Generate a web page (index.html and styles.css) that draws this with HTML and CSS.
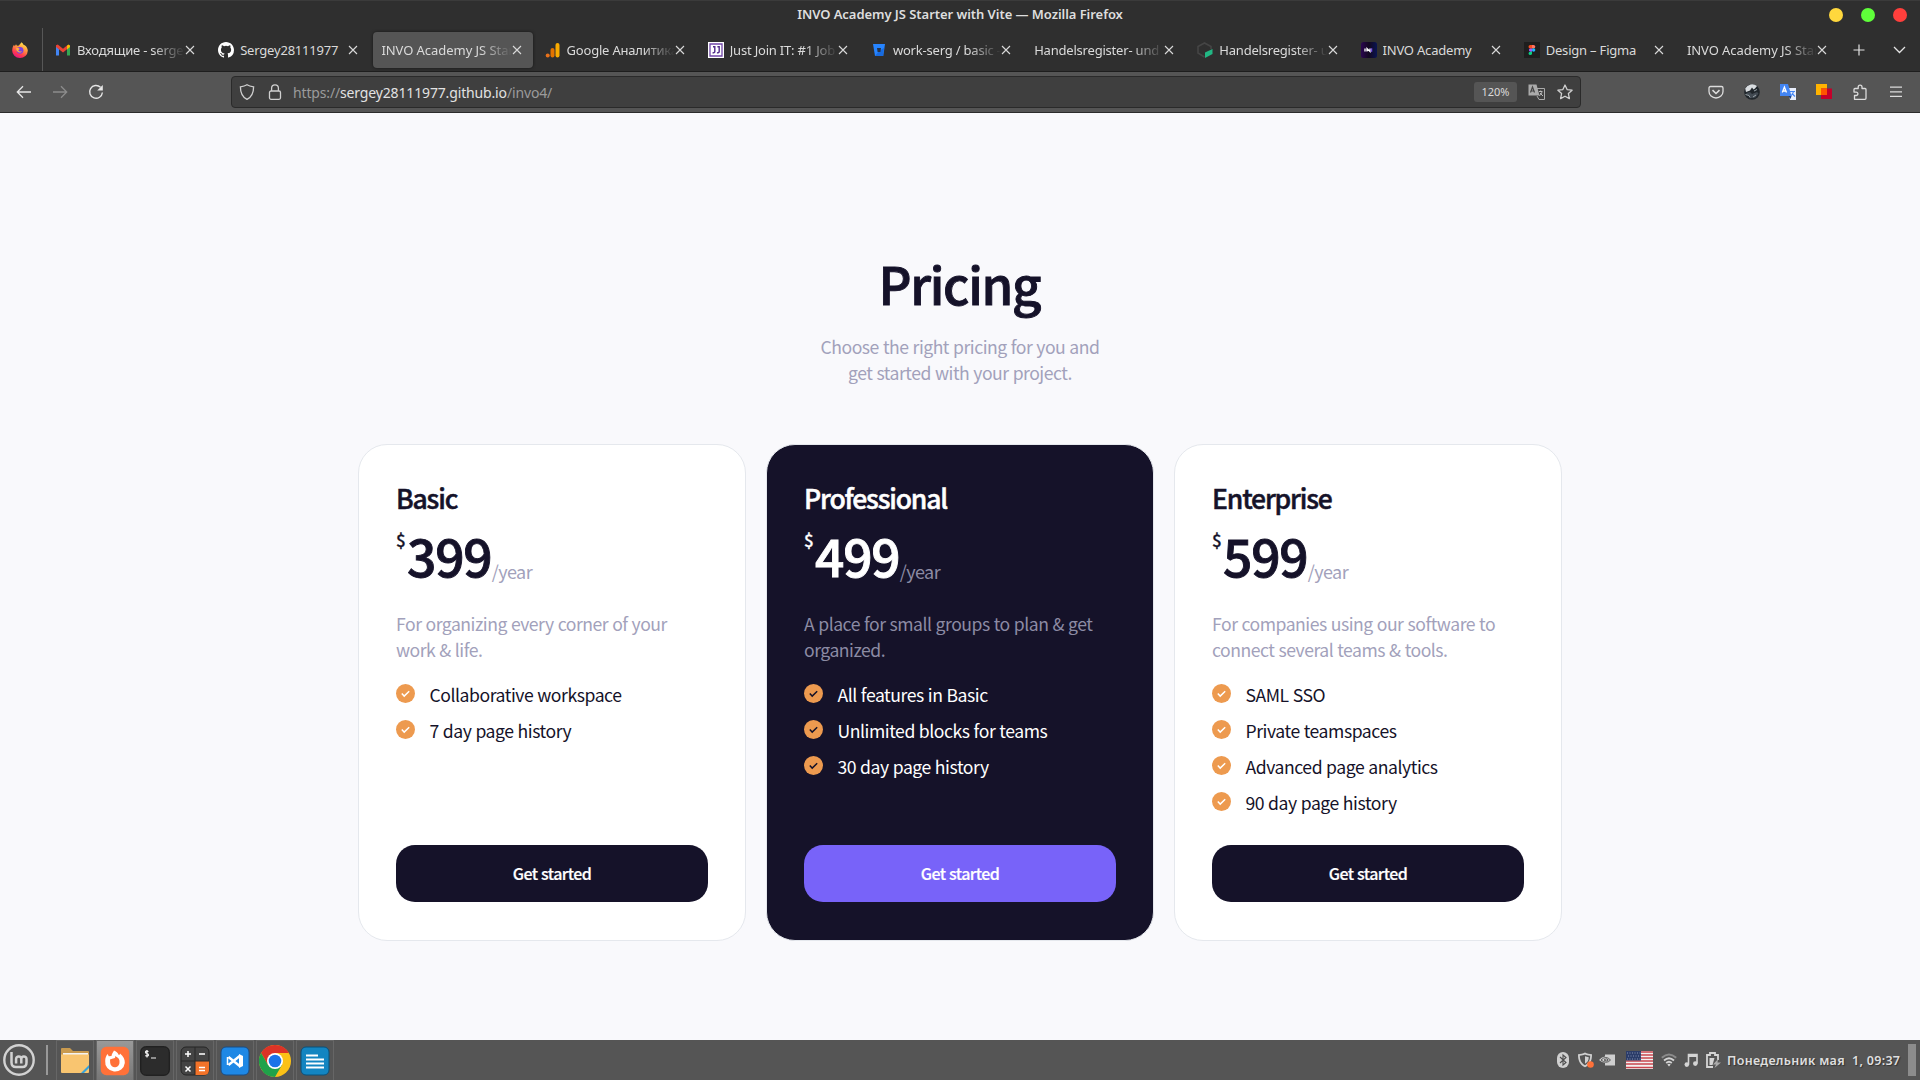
FILE: index.html
```html
<!DOCTYPE html>
<html lang="en">
<head>
<meta charset="utf-8">
<title>INVO Academy JS Starter with Vite</title>
<link rel="stylesheet" href="styles.css">
</head>
<body>
<svg class="defs" width="0" height="0">
  <symbol id="x" viewBox="0 0 10 10"><path d="M1 1l8 8M9 1L1 9" stroke="#dadada" stroke-width="1.1" fill="none"/></symbol>
  <symbol id="check" viewBox="0 0 19 19"><circle cx="9.5" cy="9.5" r="9.5" fill="#ed9a4f"/><path d="M5.8 9.6l2.4 2.5 5-4.8" fill="none" stroke="currentColor" stroke-width="1.5"/></symbol>
</svg>

<header class="titlebar">
  <span class="title">INVO Academy JS Starter with Vite — Mozilla Firefox</span>
  <div class="win"><i class="min"></i><i class="max"></i><i class="cls"></i></div>
</header>

<nav class="tabs">
  <div class="home">
    <svg width="16" height="16" viewBox="0 0 16 16"><defs><linearGradient id="ff" x1=".8" y1="0" x2=".3" y2="1"><stop offset="0" stop-color="#fff44f"/><stop offset=".4" stop-color="#ff9640"/><stop offset=".75" stop-color="#ff3750"/><stop offset="1" stop-color="#e31587"/></linearGradient></defs><path d="M9.5.2c1.200.9 1.700 1.800 2 2.600 2 .6 4.300 3 4.300 6A7.800 7.300 0 0 1 .2 8.500C.2 6 1.200 4 2 2.800l.8 1.500L4 2.200l1 1.600 2-.2C7.500 2.200 8.500 1.500 9.500.2z" fill="url(#ff)"/><circle cx="8" cy="8.300" r="3.400" fill="#7a3fe0"/><path d="M4 6.500c2-1 3 0 4 .6-1 .3-1.700.8-1.500 1.700.5 1 2.200.8 3.300.1-.3 2-4.800 3-5.800-2.400z" fill="#ffb13b"/></svg>
  </div>
  <div class="tab"><svg width="16" height="16" viewBox="0 0 16 16"><path d="M1 3.500v10h3V7z" fill="#4285f4"/><path d="M15 3.500v10h-3V7z" fill="#34a853"/><path d="M1 3.200L2.800 2.600 8 6.800l4-3.200V7.200l-4 3.200-7-5.300z" fill="#ea4335"/><path d="M12 3.600l1.500-1 1.500.8v1.700l-3 2.300z" fill="#fbbc04"/></svg><span class="t">Входящие - sergey28</span><svg class="c"><use href="#x"/></svg></div>
  <div class="tab"><svg width="16" height="16" viewBox="0 0 16 16"><path fill="#fff" d="M8 0C3.580 0 0 3.580 0 8c0 3.540 2.290 6.530 5.470 7.590.4.070.55-.17.55-.38v-1.490c-2.010.37-2.530-.49-2.690-.94-.09-.23-.48-.94-.82-1.130-.28-.15-.68-.52-.01-.53.63-.01 1.080.58 1.230.82.72 1.210 1.870.87 2.330.66.070-.52.28-.87.51-1.070-1.780-.2-3.640-.89-3.640-3.950 0-.87.31-1.590.82-2.150-.08-.2-.36-1.020.08-2.120 0 0 .67-.21 2.200.82a7.600 7.600 0 0 1 4 0c1.530-1.040 2.200-.82 2.200-.82.44 1.100.16 1.920.08 2.120.51.56.82 1.270.82 2.150 0 3.070-1.870 3.750-3.650 3.950.29.25.54.73.54 1.480v2.200c0 .21.150.46.55.38A8 8 0 0 0 16 8c0-4.420-3.580-8-8-8z"/></svg><span class="t gh">Sergey28111977</span><svg class="c"><use href="#x"/></svg></div>
  <div class="tab active"><span class="t inv">INVO Academy JS Starter</span><svg class="c"><use href="#x"/></svg></div>
  <div class="tab"><svg width="16" height="16" viewBox="0 0 16 16"><rect x="10.500" y="1" width="4" height="14.500" rx="2" fill="#f9ab00"/><rect x="5.500" y="6" width="4" height="9.500" rx="2" fill="#e37400"/><circle cx="2.700" cy="13.500" r="2" fill="#e8711a"/></svg><span class="t">Google Аналитика</span><svg class="c"><use href="#x"/></svg></div>
  <div class="tab"><svg width="16" height="16" viewBox="0 0 16 16"><path fill="#fff" d="M0 0h16v16H0z"/><path fill="none" stroke="#7045a8" stroke-width="1.300" d="M2 2h12v12H2z"/><path fill="none" stroke="#512b8b" stroke-width="1.400" d="M5 4.700h1.800v4.800q0 1.400-2.300 1.400M9.400 4.700h1.800v4.800q0 1.400-2.300 1.400"/></svg><span class="t">Just Join IT: #1 Job Board</span><svg class="c"><use href="#x"/></svg></div>
  <div class="tab"><svg width="16" height="16" viewBox="0 0 16 16"><path fill="#2684ff" d="M2 2h12l-1.700 12H4z"/><path fill="#0c57c8" d="M8 9l5-3-1 8H4z" opacity=".55"/><path fill="#263349" d="M6 6h4l-.6 4H6.600z"/></svg><span class="t">work-serg / basic — Bit</span><svg class="c"><use href="#x"/></svg></div>
  <div class="tab"><span class="t">Handelsregister- und Wirt</span><svg class="c"><use href="#x"/></svg></div>
  <div class="tab"><svg width="16" height="16" viewBox="0 0 16 16"><path d="M7.500 15L1 11V4.500L7.500 1 14 4.500V7" fill="none" stroke="#454545" stroke-width="1.600"/><path d="M8 10.500L15.500 7v5L8 16z" fill="#22b784"/></svg><span class="t">Handelsregister- und</span><svg class="c"><use href="#x"/></svg></div>
  <div class="tab"><svg width="16" height="16" viewBox="0 0 16 16"><defs><linearGradient id="iv"><stop stop-color="#2b0750"/><stop offset=".5" stop-color="#130820"/><stop offset="1" stop-color="#091452"/></linearGradient></defs><rect width="16" height="16" rx="2.500" fill="url(#iv)"/><path d="M4 6.500v3M6 9.500v-3l3 3v-3" stroke="#fff" stroke-width="1.300" fill="none"/><path d="M10.500 6.300v3.500" stroke="#7a52e8" stroke-width="1.500"/></svg><span class="t gh">INVO Academy</span><svg class="c"><use href="#x"/></svg></div>
  <div class="tab"><svg width="16" height="16" viewBox="0 0 16 16"><path fill="#1e1e1e" d="M0 0h16v16H0z"/><path fill="#f24e1e" d="M8 3H6.200a1.700 1.700 0 0 0 0 3.400H8z"/><path fill="#ff7262" d="M8 3h1.600a1.700 1.700 0 0 1 0 3.400H8z"/><path fill="#a259ff" d="M8 6.400H6.200a1.700 1.700 0 0 0 0 3.300H8z"/><circle cx="9.600" cy="8" r="1.700" fill="#1abcfe"/><path fill="#0acf83" d="M8 9.700H6.200A1.700 1.700 0 1 0 8 11.400z"/></svg><span class="t gh">Design – Figma</span><svg class="c"><use href="#x"/></svg></div>
  <div class="tab"><span class="t inv">INVO Academy JS Starter</span><svg class="c"><use href="#x"/></svg></div>
  <div class="tabtools">
    <svg width="12" height="12" viewBox="0 0 12 12"><path d="M6 .5v11M.5 6h11" stroke="#e4e4e4" stroke-width="1.200"/></svg>
    <svg width="13" height="8" viewBox="0 0 13 8"><path d="M1 1l5.500 5.500L12 1" fill="none" stroke="#e4e4e4" stroke-width="1.300"/></svg>
  </div>
</nav>

<div class="toolbar">
  <div class="nav">
    <svg width="16" height="16" viewBox="0 0 16 16" fill="none" stroke="#e6e6e6" stroke-width="1.300"><path d="M15 8H1.500M7 2.300L1.300 8 7 13.700"/></svg>
    <svg width="16" height="16" viewBox="0 0 16 16" fill="none" stroke="#8c8c8c" stroke-width="1.300"><path d="M1 8h13.500M9 2.300L14.700 8 9 13.700"/></svg>
    <svg width="16" height="16" viewBox="0 0 16 16"><path d="M12.500 3.300A6.400 6.400 0 1 0 14.400 8.500" fill="none" stroke="#e6e6e6" stroke-width="1.400"/><path d="M14.800 1v5.600H9.200z" fill="#e6e6e6"/></svg>
  </div>
  <div class="url">
    <svg width="16" height="16" viewBox="0 0 16 16" fill="none" stroke="#d0d0d0" stroke-width="1.300"><path d="M8 .8c2 1.300 4 1.700 6.600 2C14.600 8.500 13 13 8 15.400 3 13 1.400 8.500 1.400 2.800 4 2.500 6 2.100 8 .8z"/></svg>
    <svg width="16" height="16" viewBox="0 0 16 16" fill="none" stroke="#d0d0d0" stroke-width="1.300"><rect x="2.500" y="7" width="11" height="8.300" rx="1.500"/><path d="M4.600 7V4.200a3.400 3.400 0 0 1 6.800 0V7"/></svg>
    <span class="addr">https://<b>sergey28111977.github.io</b>/invo4/</span>
    <span class="zoom">120%</span>
    <svg width="17" height="16" viewBox="0 0 17 16"><path d="M.5.500h8l3 11h-11z" fill="#aaa"/><path d="M8.500 4.500h8v11h-5.500l-2-3.500" fill="none" stroke="#aaa"/><path d="M2.500 8.500L4.500 3l2 5.500M3 7h3" stroke="#444" stroke-width="1.200" fill="none"/><path d="M11 7.500h3.500M12.700 6.500c2 2 1 4-1.500 5M12 9l3 3" stroke="#bbb" fill="none"/></svg>
    <svg width="16" height="16" viewBox="0 0 16 16" fill="none" stroke="#d0d0d0" stroke-width="1.300" stroke-linejoin="round"><path d="M8 1l2.100 4.600 5 .6-3.700 3.400 1 5L8 12.200l-4.400 2.400 1-5L.9 6.200l5-.6z"/></svg>
  </div>
  <div class="ext">
    <svg width="16" height="16" viewBox="0 0 16 16" fill="none" stroke="#dcdcdc" stroke-width="1.300"><path d="M2.500 2.500h11q1.500 0 1.500 1.500v3.500a7 6.500 0 0 1-14 0V4q0-1.500 1.500-1.500z"/><path d="M4.500 6.200L8 9.500l3.500-3.300" stroke-width="1.600"/></svg>
    <svg width="16" height="16" viewBox="0 0 16 16"><circle cx="8" cy="8" r="7.800" fill="#20262b"/><path d="M1.200 4.500A7.800 7.800 0 0 1 13 2l-2 2.500-1.500 1-1.500-2-2 3-4 1.500z" fill="#d9dde0"/><path d="M2 9l4-1 2 2 5-2 1.500 1.500-3 4-5 .8z" fill="#424a52"/><path d="M1.500 10.500l3.500 1 1 2M10 7l3-1.500M9 13l3-2" stroke="#9ba5ab" fill="none"/></svg>
    <svg width="16" height="16" viewBox="0 0 16 16"><path d="M8 4h8v12h-6z" fill="#e8eefb"/><path d="M0 0h8l3.500 12H0z" fill="#4285f4"/><path d="M8.500 12h3l-1 3z" fill="#173a7b"/><path d="M2.300 8.500L4.400 3l2.100 5.500M3 7h3" stroke="#fff" stroke-width="1.300" fill="none"/><path d="M10 7.500h5M13.500 7.500q-.5 3-3 4.500M12 9.500l3 3" stroke="#4285f4" stroke-width="1.200" fill="none"/></svg>
    <svg width="16" height="16" viewBox="0 0 16 16"><path fill="#ffb300" d="M0 0h11v11H0z"/><path fill="#c4002b" d="M5 4.500h11V15H5z"/><path fill="#ff5400" d="M5 4.500h6V11H5z"/></svg>
    <svg width="16" height="16" viewBox="0 0 16 16" fill="none" stroke="#dcdcdc" stroke-width="1.300" stroke-linejoin="round"><path d="M2.500 15.300V11.500h1.700a1.700 1.700 0 0 0 0-3.400H2V5.500q0-1 1-1h3.200V3a1.900 1.900 0 0 1 3.800 0v1.500h3q1 0 1 1v8.800q0 1-1 1z"/></svg>
    <svg width="16" height="16" viewBox="0 0 16 16"><path d="M2 3.200h12M2 7.800h12M2 12.400h12" stroke="#dcdcdc" stroke-width="1.200"/></svg>
  </div>
</div>

<main class="page">
  <h1>Pricing</h1>
  <p class="lead">Choose the right pricing for you and<br>get started with your project.</p>
  <section class="cards">
    <article class="card">
      <h2>Basic</h2>
      <div class="price"><sup>$</sup><strong>399</strong><span>/year</span></div>
      <p class="desc">For organizing every corner of your<br>work &amp; life.</p>
      <ul>
        <li><svg><use href="#check"/></svg>Collaborative workspace</li>
        <li><svg><use href="#check"/></svg>7 day page history</li>
      </ul>
      <button>Get started</button>
    </article>
    <article class="card dark">
      <h2>Professional</h2>
      <div class="price"><sup>$</sup><strong>499</strong><span>/year</span></div>
      <p class="desc">A place for small groups to plan &amp; get<br>organized.</p>
      <ul>
        <li><svg><use href="#check"/></svg>All features in Basic</li>
        <li><svg><use href="#check"/></svg>Unlimited blocks for teams</li>
        <li><svg><use href="#check"/></svg>30 day page history</li>
      </ul>
      <button>Get started</button>
    </article>
    <article class="card">
      <h2>Enterprise</h2>
      <div class="price"><sup>$</sup><strong>599</strong><span>/year</span></div>
      <p class="desc">For companies using our software to<br>connect several teams &amp; tools.</p>
      <ul>
        <li><svg><use href="#check"/></svg>SAML SSO</li>
        <li><svg><use href="#check"/></svg>Private teamspaces</li>
        <li><svg><use href="#check"/></svg>Advanced page analytics</li>
        <li><svg><use href="#check"/></svg>90 day page history</li>
      </ul>
      <button>Get started</button>
    </article>
  </section>
</main>

<footer class="taskbar">
  <svg class="mint" width="32" height="32" viewBox="0 0 32 32" fill="none" stroke="#d2d2d2"><circle cx="16" cy="16" r="14.700" stroke-width="2.400"/><path d="M8.500 8v10.500q0 4.500 4.500 4.500h6.500q4 0 4-4.500V15a2.600 2.600 0 0 0-5.200 0v4.500M18.300 19.500V15a2.600 2.600 0 0 0-5.200 0v4.500" stroke-width="2.500"/></svg>
  <i class="sep"></i>
  <div class="apps">
    <span class="app"><svg viewBox="0 0 30 30"><path d="M1 3q0-1 1-1h8l3 3h15q1 0 1 1v8H1z" fill="#c99a4f"/><path d="M3 7h25v8H3z" fill="#f3f3f3"/><path d="M1 8.500h28V26q0 1-1 1H2q-1 0-1-1z" fill="#f9c570"/><path d="M21 27l8-8v3l-5 5z" fill="#36a3dc"/></svg></span>
    <span class="app on"><svg viewBox="0 0 30 30"><rect x=".8" y=".8" width="28.400" height="28.400" rx="5.500" fill="#ff7139"/><path d="M14 4.500c2 .5 4 2.500 4.800 4.500 1-.3 1.200-.8 1.200-1.500 3.500 3 5 6 4.800 9.500A9.800 9.500 0 0 1 5.200 15c0-3 1-5.500 2.500-7l1 2.300 2.800-.3c.3-2 1.300-3.500 2.500-5.500z" fill="#fff"/><path d="M10 13.500l3-1q3-.5 2-2.500 5 2 4.500 6a4.600 4.600 0 0 1-9.300 1z" fill="#ff7139"/></svg></span>
    <span class="app"><svg viewBox="0 0 30 30"><rect x=".7" y=".7" width="28.600" height="28.600" rx="5" fill="#2c2c2c" stroke="#181818"/><path d="M8.500 5.500q-3-1-3 .7c0 1.800 3 .9 3 2.700q0 1.700-3.200.7M7 4v7.500M11 12h5" fill="none" stroke="#f2f2f2" stroke-width="1.200"/></svg></span>
    <span class="app"><svg viewBox="0 0 30 30"><rect x="1" y="1" width="28" height="28" rx="5" fill="#444" stroke="#252525"/><path d="M15 15h14v9q0 5-5 5h-9z" fill="#f37329"/><path d="M15 1v28M1 15h28" stroke="#282828"/><path d="M5 8h6M8 5v6M19 8h6M5.500 20.500l5 5M10.500 20.500l-5 5M19 21.500h6M19 24.500h6" stroke="#fff" stroke-width="1.500"/></svg></span>
    <span class="app"><svg viewBox="0 0 30 30"><rect x="1" y="1" width="28" height="28" rx="5" fill="#1e88e5" stroke="#1b4c81"/><path d="M8.500 11L20 20.200M8.500 19L20 9.800" stroke="#fff" stroke-width="2.400"/><path d="M7.500 11v8" stroke="#fff" stroke-width="1.500"/><path d="M19 8l4 2v10l-4 2z" fill="#fff"/></svg></span>
    <span class="app"><svg class="chrome" viewBox="0 0 32 32"><circle cx="16" cy="16" r="16" fill="#fbc116"/><path d="M16 16L9.100 20 2.140 8A16 16 0 0 1 29.860 8H16z" fill="#dc3327"/><path d="M2.140 8A16 16 0 0 0 16 32l6.900-12L16 16 9.100 20z" fill="#1fa24a"/><circle cx="16" cy="16" r="8" fill="#fff"/><circle cx="16" cy="16" r="6.300" fill="#1a73e8"/></svg></span>
    <span class="app"><svg viewBox="0 0 30 30"><rect x="1" y="1" width="28" height="28" rx="5" fill="#1385c1" stroke="#0b5079"/><path d="M6 9.500h12M6 13.500h18M6 17.500h18M6 21.500h18" stroke="#fff" stroke-width="2"/></svg></span>
  </div>
  <div class="tray">
    <svg width="12" height="16" viewBox="0 0 12 16"><rect width="12" height="16" rx="6" fill="#d0d0d0"/><path d="M3 5l6 5.500L6 13V3l3 2.500L3 11" fill="none" stroke="#4d4d4d" stroke-width="1.100"/></svg>
    <svg width="17" height="16" viewBox="0 0 17 16"><path d="M8 .5c2 1.200 4.500 1.500 7 1.700 0 6-1.500 10.300-7 13-5.500-2.700-7-7-7-13C3.500 2 6 1.700 8 .5z" fill="#d0d0d0"/><path d="M8 2.500c1.500.7 3 1.100 5.200 1.300-.2 4.700-1.700 7.500-5.200 9.400-3.500-1.900-5-4.700-5.200-9.400C5 3.600 6.500 3.200 8 2.500z" fill="#555"/><path d="M8 4.200c1.200.5 2.400.8 3.800 1-.2 3.200-1.300 5-3.800 6.600z" fill="#d0d0d0"/><circle cx="13.500" cy="12.500" r="3.300" fill="#ff7139"/></svg>
    <svg width="16" height="12" viewBox="0 0 16 12"><path d="M6 .5h10v11H6z" fill="#cfcfcf"/><path d="M0 6q6-7 12 0-5 6-12 0z" fill="#cfcfcf"/><path d="M2 6q5-5 9.500 0-4 4.500-9.500 0zM5 6q2.500-2.500 4.300 0Q7.500 8 5 6z" fill="none" stroke="#5a5a5a"/></svg>
    <svg width="27" height="18" viewBox="0 0 27 18"><path fill="#f3f0f0" d="M0 0h27v18H0z"/><path d="M0 1h27M0 4h27M0 7h27M0 10h27M0 13h27M0 16.500h27" stroke="#c9454e" stroke-width="1.700"/><path fill="#2b3c69" d="M0 0h15v9.500H0z"/><path d="M1 2h14M2 5h13M1 8h14" stroke="#8792b1" stroke-dasharray="1 1.500"/></svg>
    <svg width="16" height="14" viewBox="0 0 16 14"><path d="M.8 4.800Q8-1.700 15.200 4.800" fill="none" stroke="#8b8b8b" stroke-width="2"/><path d="M3 7.500Q8 3 13 7.500M5.200 10Q8 7.500 10.800 10" fill="none" stroke="#d4d4d4" stroke-width="1.800"/><path d="M6.300 11.500q1.700-1.500 3.400 0L8 13.500z" fill="#d4d4d4"/></svg>
    <svg width="14" height="14" viewBox="0 0 14 14"><path d="M4.500 11.500V1.500h8.500v9" fill="none" stroke="#d4d4d4" stroke-width="1.600"/><path d="M4 2h9v2H4z" fill="#d4d4d4"/><circle cx="2.800" cy="11.600" r="2.300" fill="#d4d4d4"/><circle cx="11.300" cy="10.600" r="2.300" fill="#d4d4d4"/></svg>
    <svg width="15" height="16" viewBox="0 0 15 16"><path d="M7 15H1V3h3V1h5v2h3v5" fill="none" stroke="#d4d4d4" stroke-width="1.800"/><path d="M3.500 6h5l-2 7h-3z" fill="#d4d4d4"/><path d="M12 7l-5 5.500h3L8.500 16 15 10.500h-3.500z" fill="#aaa"/></svg>
    <span class="clock">Понедельник мая&nbsp; 1, 09:37</span>
    <i class="show"></i>
  </div>
</footer>
</body>
</html>
```
FILE: styles.css
```css
* { box-sizing: border-box; }
body {
  margin: 0;
  width: 1920px;
  height: 1080px;
  overflow: hidden;
  display: flex;
  flex-direction: column;
  background: #f9f9fc;
  font-family: "Noto Sans", sans-serif;
}
svg { flex: none; display: block; }
.defs { position: absolute; }

/* window title */
.titlebar {
  height: 28px;
  display: grid;
  grid-template-columns: 1fr auto 1fr;
  align-items: center;
  background: #2f2f2f;
  border-top: 1px solid #3b3b3b;
  color: #dedede;
}
.title { grid-column: 2; font-size: 13px; font-weight: 600; line-height: 27px; letter-spacing: -.05px; }
.win { display: flex; justify-content: flex-end; gap: 18px; padding-right: 13px; }
.win i { width: 14px; height: 14px; border-radius: 50%; }
.min { background: #ffd83d; }
.max { background: #5fff3a; }
.cls { background: #ff3f3c; }

/* tab strip */
.tabs {
  height: 44px;
  display: flex;
  background: #2f2f2f;
  border-bottom: 1px solid #1e1e1e;
  color: #dadada;
}
.home { width: 43px; margin-right: 4px; border-right: 1px solid #575757; padding: 14px 0 0 12px; }
.tab {
  width: 163.200px;
  display: flex;
  align-items: center;
  height: 44px;
  padding: 0 15px 0 8px;
}
.tab > svg:first-child { margin-right: 6px; }
.active { height: 36px; margin-top: 4px; width: 160px; margin-right: 3.200px; padding: 0 11.500px 0 8px; background: #555; border-radius: 4px; box-shadow: 0 0 3px #151515; }
.tab .t {
  flex: 1;
  min-width: 0;
  overflow: hidden;
  white-space: nowrap;
  font-size: 13px;
  letter-spacing: -.2px;
  line-height: 20px;
  -webkit-mask-image: linear-gradient(to left, transparent, #000 32px);
  mask-image: linear-gradient(to left, transparent, #000 32px);
}
.tab .gh { -webkit-mask-image: none; mask-image: none; }
.tab .inv { letter-spacing: -.05px; }
.tab .c { width: 10px; height: 10px; }
.tabtools { display: flex; align-items: center; gap: 28px; margin-left: 11px; }

/* navigation toolbar */
.toolbar {
  height: 41px;
  display: flex;
  align-items: center;
  background: #555;
  border-bottom: 1px solid #2b2b2b;
}
.nav { width: 231px; display: flex; gap: 20px; padding-left: 16px; }
.url {
  width: 1350px;
  height: 32px;
  display: flex;
  align-items: center;
  padding: 0 7px;
  background: #3f3f3f;
  border: 1px solid #2a2a2a;
  border-radius: 4px;
}
.url svg + svg { margin-left: 12px; }
.addr { flex: 1; margin-left: 10px; font-size: 14px; letter-spacing: -.15px; color: #9b9b9b; }
.addr b { font-weight: 400; color: #e2e2e2; }
.zoom { width: 43px; height: 20px; margin-right: 11px; border-radius: 3px; background: #555; color: #dadada; font-size: 11px; line-height: 20px; text-align: center; }
.ext { flex: 1; display: flex; justify-content: flex-end; gap: 20px; padding-right: 16px; }

/* pricing page */
.page {
  height: 927px;
  padding-top: 133px;
  color: #151229;
  font-family: "Noto Sans CJK JP", "Noto Sans CJK SC", sans-serif;
}
h1, h2, p, ul { margin: 0; }
h1 { text-align: center; font-size: 51px; line-height: 75px; height: 74px; font-weight: 500; letter-spacing: -1.300px; text-indent: -1.300px; -webkit-text-stroke: .9px; }
.lead { margin-top: 14px; text-align: center; }
.lead, .desc { font-size: 17.600px; line-height: 26px; letter-spacing: -.49px; word-spacing: .6px; color: #a2a1bb; }
.cards { width: 1204px; margin: 58px auto 0; display: grid; grid-template-columns: repeat(3, 1fr); gap: 20px; }
.card {
  height: 497px;
  display: flex;
  flex-direction: column;
  padding: 32px 37px 38px;
  background: #fff;
  border: 1px solid #e5e8ed;
  border-radius: 29px;
}
h2 { font-size: 26.500px; line-height: 41px; font-weight: 500; letter-spacing: -1.150px; -webkit-text-stroke: .5px; }
.price { display: flex; height: 70px; margin-top: 1px; }
.price sup { width: 11px; font-size: 17px; line-height: 24px; margin-top: 9px; font-weight: 500; vertical-align: baseline; -webkit-text-stroke: .3px; }
.price strong { font-size: 51.500px; line-height: 71px; font-weight: 500; letter-spacing: -1.200px; -webkit-text-stroke: .9px; }
.price span { margin: 39px 0 0 .3px; font-size: 18px; line-height: 26px; letter-spacing: -.57px; color: #a2a1bb; }
.desc { margin-top: 22px; }
ul { list-style: none; padding: 0; margin-top: 13px; }
li { height: 36px; display: flex; font-size: 17.600px; line-height: 38px; letter-spacing: -.45px; word-spacing: .5px; }
li svg { width: 19px; height: 19px; margin: 8px 14.500px 0 0; color: #fff; }
button {
  height: 57px;
  margin-top: auto;
  padding: 0;
  border: 0;
  border-radius: 19px;
  background: #151229;
  color: #fff;
  font: 500 16px/57px "Noto Sans CJK JP", "Noto Sans CJK SC", sans-serif;
  letter-spacing: -.6px;
  word-spacing: .6px;
  -webkit-text-stroke: .2px;
}
.dark { background: #151229; color: #fff; }
.dark .desc, .dark .price span { color: #8c8ba4; }
.dark li svg { color: #151229; }
.dark button { background: #7863f9; }

/* desktop panel */
.taskbar { height: 40px; display: flex; align-items: center; background: #555; }
.mint { margin-left: 3px; }
.sep { width: 2px; height: 30px; margin: 0 8px 0 11px; background: #999; }
.apps { display: flex; gap: 2px; }
.app { width: 38px; height: 40px; display: flex; align-items: center; justify-content: center; border: 1px solid #666; border-width: 1px 1px 0; }
.app svg { width: 30px; height: 30px; }
.app .chrome { width: 32px; height: 32px; }
.on { background: linear-gradient(#999, #777); }
.tray { flex: 1; display: flex; align-items: center; justify-content: flex-end; padding-right: 4px; }
.tray svg { margin-right: 8px; }
.tray svg:nth-of-type(2) { margin-right: 5px; }
.tray svg:nth-of-type(3) { margin-right: 11px; }
.tray svg:nth-of-type(5) { margin-right: 7px; }
.tray svg:nth-of-type(7) { margin-right: 6px; }
.clock { width: 174px; color: #dedede; font-size: 12.500px; font-weight: 600; letter-spacing: .3px; white-space: nowrap; text-shadow: 1px 1px 1px #333; }
.show { width: 8px; height: 32px; margin-left: 7px; background: #8c8c8c; }
```
